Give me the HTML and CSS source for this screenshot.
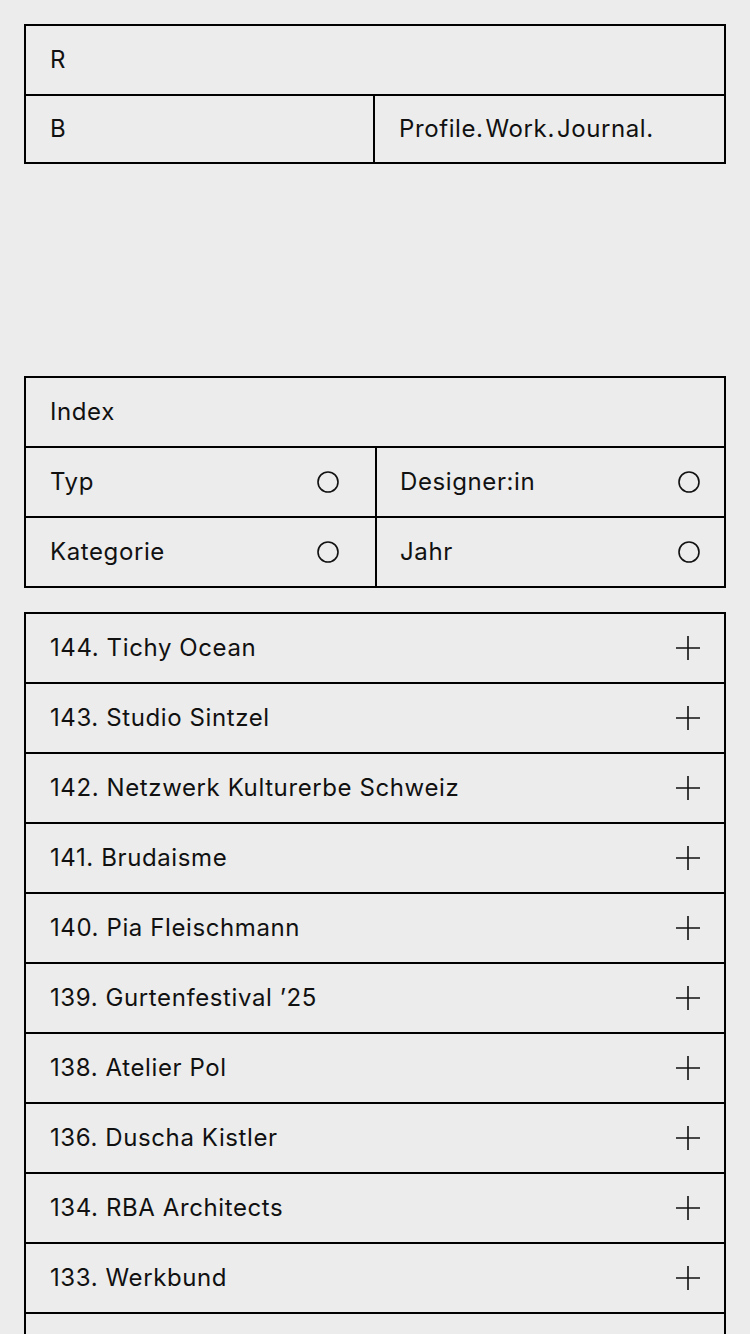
FILE: index.html
```html
<!DOCTYPE html>
<html lang="de">
<head>
    <meta charset="UTF-8">
    <meta name="viewport" content="width=device-width, initial-scale=1.0">
    <title>Index</title>
    <link rel="stylesheet" href="styles.css">
</head>
<body>
    <header class="site-header">
        <div class="cell cell-wide">R</div>
        <div class="cell cell-split">B</div>
        <nav class="cell nav">Profile.<span>Work.</span><span>Journal.</span></nav>
    </header>

    <section class="filter">
        <div class="cell cell-wide">Index</div>
        <div class="cell filter-item left">Typ <svg class="ring" viewBox="0 0 22 22"><circle cx="11" cy="11" r="10" /></svg></div>
        <div class="cell filter-item right">Designer:in <svg class="ring" viewBox="0 0 22 22"><circle cx="11" cy="11" r="10" /></svg></div>
        <div class="cell filter-item left">Kategorie <svg class="ring" viewBox="0 0 22 22"><circle cx="11" cy="11" r="10" /></svg></div>
        <div class="cell filter-item right">Jahr <svg class="ring" viewBox="0 0 22 22"><circle cx="11" cy="11" r="10" /></svg></div>
    </section>

    <ul class="project-list" id="projectList"></ul>

    <script>
        const projects = [
            '144. Tichy Ocean',
            '143. Studio Sintzel',
            '142. Netzwerk Kulturerbe Schweiz',
            '141. Brudaisme',
            '140. Pia Fleischmann',
            '139. Gurtenfestival ’25',
            '138. Atelier Pol',
            '136. Duscha Kistler',
            '134. RBA Architects',
            '133. Werkbund',
            '132. Kunsthalle Bern'
        ];

        const list = document.getElementById('projectList');
        projects.forEach(name => {
            const li = document.createElement('li');
            li.className = 'project';
            li.innerHTML = `<span>${name}</span><svg class="plus" viewBox="0 0 24 24"><path d="M12 0V24M0 12H24" /></svg>`;
            list.appendChild(li);
        });
    </script>
</body>
</html>
```

FILE: styles.css
```css
body {
    font-family: Inter, 'Liberation Sans', Arial, sans-serif;
    margin: 0;
    padding: 24px;
    background: #ececec;
    color: #111;
    font-size: 24px;
    line-height: 1;
    letter-spacing: 0.6px;
}

.site-header,
.filter {
    display: grid;
    grid-template-columns: 1fr 1fr;
    border: 2px solid #000;
}

.cell {
    display: flex;
    align-items: center;
    height: 68px;
    padding: 0 24px;
    box-sizing: border-box;
}

.cell-wide {
    grid-column: 1 / 3;
    border-bottom: 2px solid #000;
    height: 70px;
}

.site-header .cell-split,
.site-header .nav {
    height: 66px;
}

.cell-split {
    border-right: 2px solid #000;
}

.nav span {
    margin-left: 2px;
}

.filter {
    margin-top: 212px;
}

.filter-item {
    justify-content: space-between;
}

.filter-item.left {
    padding-right: 36px;
}

.filter-item.right {
    border-left: 2px solid #000;
    padding-left: 23px;
}

.filter-item:nth-child(2),
.filter-item:nth-child(3) {
    border-bottom: 2px solid #000;
    height: 70px;
}

.ring {
    width: 22px;
    height: 22px;
    fill: none;
    stroke: #111;
    stroke-width: 1.6;
}

.project-list {
    list-style: none;
    margin: 24px 0 0;
    padding: 0;
    border: 2px solid #000;
}

.project {
    display: flex;
    align-items: center;
    justify-content: space-between;
    height: 68px;
    padding: 0 24px;
}

.project + .project {
    border-top: 2px solid #000;
}

.plus {
    width: 24px;
    height: 24px;
    fill: none;
    stroke: #111;
    stroke-width: 1.6;
}
```
